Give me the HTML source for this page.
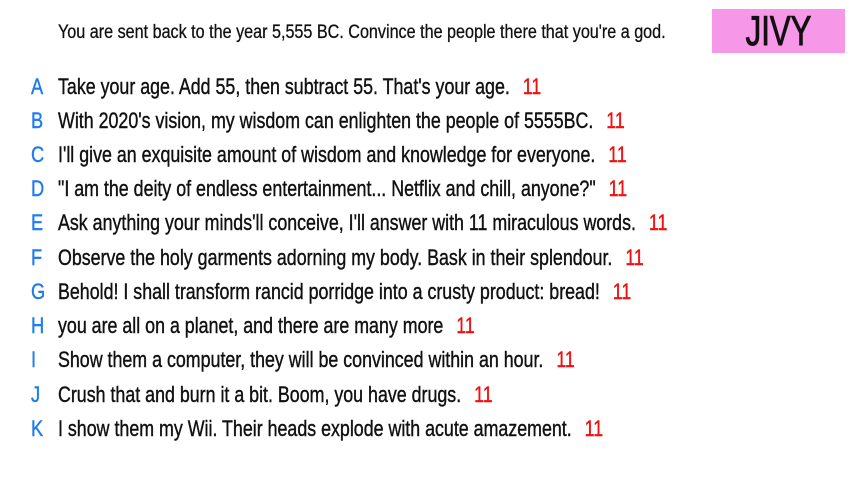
<!DOCTYPE html>
<html><head><meta charset="utf-8"><style>
html,body{margin:0;padding:0;background:#fff;width:853px;height:480px;overflow:hidden;}
body{font-family:"Liberation Sans",sans-serif;color:#111;position:relative;}
.h{position:absolute;left:58px;top:22px;font-size:19px;white-space:nowrap;transform:scaleX(0.85);transform-origin:0 0;-webkit-text-stroke:0.3px #111;}
.box{position:absolute;left:712px;top:9px;width:133px;height:44px;background:#f797e8;}
.box span{position:absolute;left:0;width:133px;text-align:center;top:0;font-size:42px;line-height:44px;color:#111;transform:scaleX(0.74);-webkit-text-stroke:1px #111;}
.r{position:absolute;left:0;font-size:22px;white-space:nowrap;line-height:24px;-webkit-text-stroke:0.4px currentColor;}
.l{position:absolute;left:31px;color:#1e7bf0;transform:scaleX(0.83);transform-origin:0 0;}
.t{position:absolute;left:58px;transform:scaleX(0.81);transform-origin:0 0;}
.n{color:#f01010;margin-left:16px;}
</style></head><body>
<div class="h">You are sent back to the year 5,555 BC. Convince the people there that you're a god.</div>
<div class="box"><span>JIVY</span></div>
<div class="r" style="top:75px"><span class="l">A</span><span class="t">Take your age. Add 55, then subtract 55. That's your age.<span class="n">11</span></span></div>
<div class="r" style="top:109px"><span class="l">B</span><span class="t">With 2020's vision, my wisdom can enlighten the people of 5555BC.<span class="n">11</span></span></div>
<div class="r" style="top:143px"><span class="l">C</span><span class="t">I'll give an exquisite amount of wisdom and knowledge for everyone.<span class="n">11</span></span></div>
<div class="r" style="top:177px"><span class="l">D</span><span class="t">"I am the deity of endless entertainment... Netflix and chill, anyone?"<span class="n">11</span></span></div>
<div class="r" style="top:211px"><span class="l">E</span><span class="t">Ask anything your minds'll conceive, I'll answer with 11 miraculous words.<span class="n">11</span></span></div>
<div class="r" style="top:246px"><span class="l">F</span><span class="t">Observe the holy garments adorning my body. Bask in their splendour.<span class="n">11</span></span></div>
<div class="r" style="top:280px"><span class="l">G</span><span class="t">Behold! I shall transform rancid porridge into a crusty product: bread!<span class="n">11</span></span></div>
<div class="r" style="top:314px"><span class="l">H</span><span class="t">you are all on a planet, and there are many more<span class="n">11</span></span></div>
<div class="r" style="top:348px"><span class="l">I</span><span class="t">Show them a computer, they will be convinced within an hour.<span class="n">11</span></span></div>
<div class="r" style="top:383px"><span class="l">J</span><span class="t">Crush that and burn it a bit. Boom, you have drugs.<span class="n">11</span></span></div>
<div class="r" style="top:417px"><span class="l">K</span><span class="t">I show them my Wii. Their heads explode with acute amazement.<span class="n">11</span></span></div>
</body></html>
